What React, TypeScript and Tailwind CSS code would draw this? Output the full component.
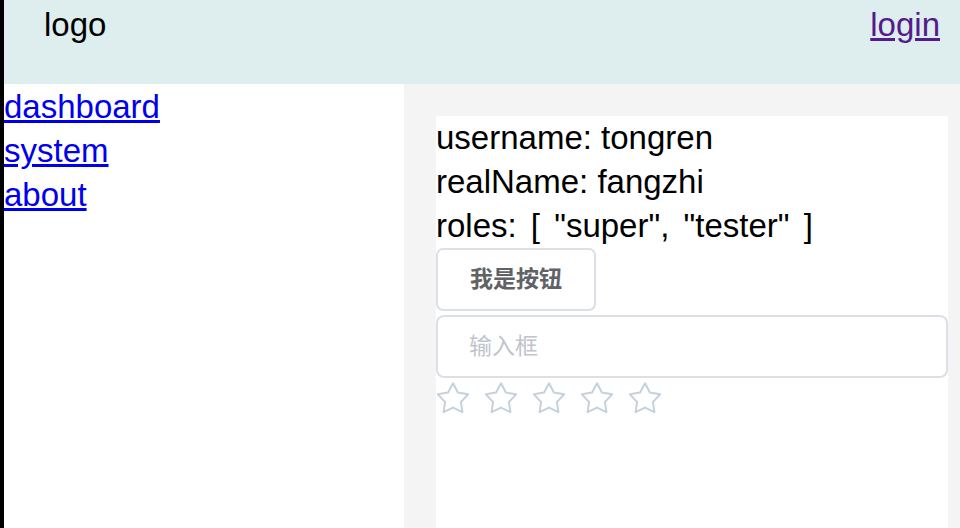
import React from 'react';

function StarOff() {
  return (
    <svg width="32" height="32" viewBox="2 2 20 20" fill="none" stroke="#c6d1de" strokeWidth="1.25" strokeLinejoin="round">
      <path d="M12 2.8L15.06 8.59 21.51 9.71 16.95 14.41 17.88 20.89 12 18 6.12 20.89 7.05 14.41 2.49 9.71 8.94 8.59Z" />
    </svg>
  );
}

export default function App() {
  const links = ['dashboard', 'system', 'about'];

  return (
    <div className="flex h-[528px] w-[960px] overflow-hidden bg-white text-black" style={{ fontFamily: '"Liberation Sans", "Noto Sans CJK SC", sans-serif' }}>
      <div className="w-1 shrink-0 bg-black" />
      <div className="flex flex-1 flex-col">
        <header className="flex h-[84px] shrink-0 items-start justify-between bg-[#deeded] pl-10 pr-5 text-[33px] leading-[50px]">
          <span>logo</span>
          <a href="#" className="text-[#551a8b] underline">login</a>
        </header>
        <div className="flex flex-1">
          <nav className="flex w-[400px] shrink-0 flex-col pt-[1px] text-[33px] leading-[44px]">
            {links.map((l) => (
              <a key={l} href="#" className="self-start text-[#0000ee] underline">{l}</a>
            ))}
          </nav>
          <main className="flex-1 bg-[#f4f4f4] pl-8 pr-3 pt-8">
            <div className="h-full bg-white">
              <div className="text-[33px] leading-[44px]">
                <div>username: tongren</div>
                <div>realName: fangzhi</div>
                <div className="[word-spacing:5px]">roles: [ "super", "tester" ]</div>
              </div>
              <button className="flex h-[63px] w-[160px] items-center justify-center rounded-[7px] border-2 border-[#dcdfe6] bg-white text-[23px] font-semibold text-[#606266]">
                我是按钮
              </button>
              <div className="mt-[4px] flex h-[63px] items-center rounded-[8px] border-2 border-[#dcdfe6] bg-white pl-[31px] text-[23px] text-[#c0c4cc]">
                输入框
              </div>
              <div className="mt-[4px] flex gap-4 pl-[1px]">
                {[0, 1, 2, 3, 4].map((i) => (
                  <StarOff key={i} />
                ))}
              </div>
            </div>
          </main>
        </div>
      </div>
    </div>
  );
}
